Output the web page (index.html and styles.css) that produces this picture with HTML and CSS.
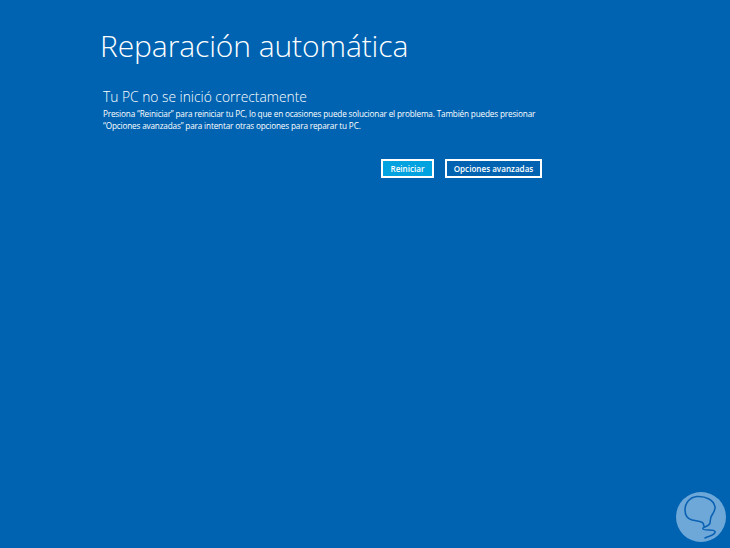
FILE: index.html
```html
<!DOCTYPE html>
<html lang="es">
<head>
<meta charset="utf-8">
<title>Reparación automática</title>
<link rel="stylesheet" href="styles.css">
</head>
<body>
<main class="screen">
  <h1 class="title">Reparación automática</h1>
  <section class="content">
    <h2 class="subtitle">Tu PC no se inició correctamente</h2>
    <p class="text">Presiona “Reiniciar” para reiniciar tu PC, lo que en ocasiones puede solucionar el problema. También puedes presionar<br>“Opciones avanzadas” para intentar otras opciones para reparar tu PC.</p>
    <div class="actions">
      <button class="btn btn-primary" type="button">Reiniciar</button>
      <button class="btn btn-secondary" type="button">Opciones avanzadas</button>
    </div>
  </section>
</main>
<svg class="mark" viewBox="0 0 50 50" width="50" height="50" aria-hidden="true">
  <circle cx="25" cy="25" r="25" fill="#6ea8d9"/>
  <path d="M29 46 C33 44 40 43 39 39.500 C38 37 28 39 27 37 C26 34.500 33 35 34 31 C34.500 28 34 26 36 23 C38 20 39.500 18 39 15 C38 8 30 4 21 4.500 C14 5 9 11 9 18 C9 24 12 27 16 28 C20 29 25 29 27 31 L28 34" fill="none" stroke="#0b62b3" stroke-width="1.600" stroke-linecap="round"/>
</svg>
</body>
</html>
```
FILE: styles.css
```css
html, body {
  margin: 0;
  height: 100%;
}
body {
  position: relative;
  background: #0063b1;
  color: #fff;
  font-family: "Open Sans", "Noto Sans", sans-serif;
  overflow: hidden;
}
.screen {
  padding: 24px 0 0 100px;
}
.title {
  margin: 0;
  font-size: 30px;
  line-height: 44px;
  font-weight: 300;
  letter-spacing: -0.1px;
}
.content {
  width: 439px;
  margin: 19px 0 0 3px;
}
.subtitle {
  margin: 0;
  font-size: 13.8px;
  line-height: 20px;
  font-weight: 300;
}
.text {
  margin: 1px 0 0;
  font-size: 8.2px;
  line-height: 12px;
  letter-spacing: -0.165px;
  white-space: nowrap;
}
.actions {
  display: flex;
  justify-content: flex-end;
  gap: 11px;
  margin-top: 27px;
}
.btn {
  box-sizing: border-box;
  height: 19px;
  padding: 0;
  border: 2px solid #fff;
  background: #0063b1;
  color: #fff;
  font-family: inherit;
  font-size: 8.1px;
  font-weight: 600;
}
.btn-primary {
  width: 53px;
  background: #00a2e0;
}
.btn-secondary {
  width: 97px;
}
.mark {
  position: absolute;
  left: 676px;
  top: 492px;
}
```
